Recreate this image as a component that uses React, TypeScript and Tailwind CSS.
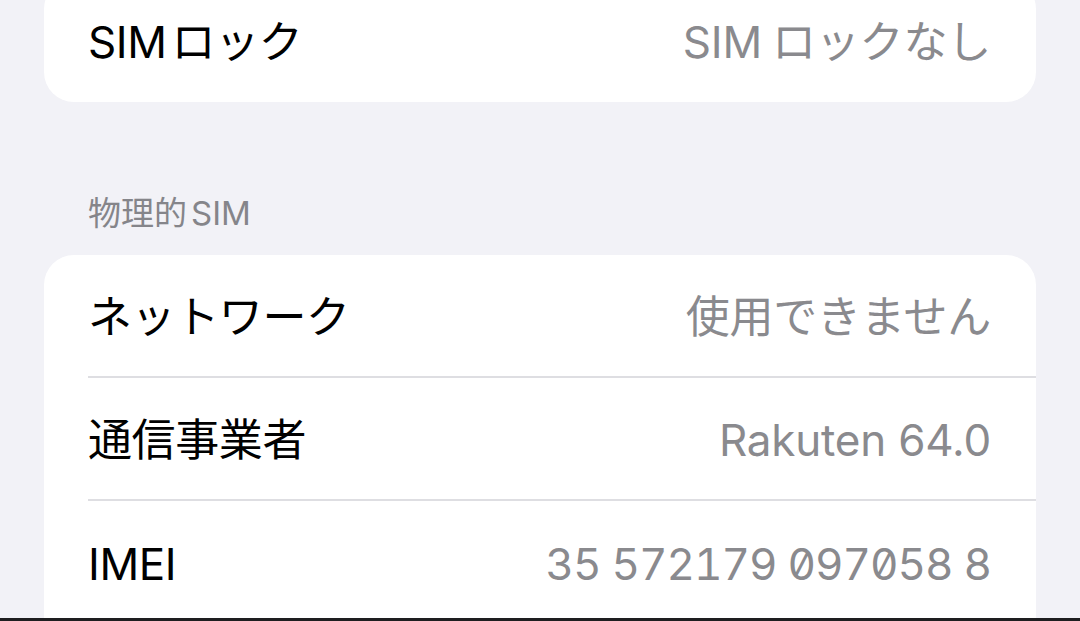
import React from 'react'

type Row = { label: React.ReactNode; value: React.ReactNode; mono?: boolean }

const font = "font-['Inter','Noto_Sans_CJK_JP',sans-serif]"

function SettingRow({ label, value, mono, last }: Row & { last?: boolean }) {
  return (
    <div className="pl-[44px]">
      <div
        className={`flex items-center justify-between h-[123px] pt-[3px] pr-[45px] ${
          last ? '' : 'border-b-[2px] border-[#dedee2]'
        }`}
      >
        <span className="text-black text-[44px] tracking-[-0.4px]">{label}</span>
        <span
          className={`text-[#8a8a8e] text-[44px] ${
            mono ? 'tabular-nums slashed-zero tracking-[-1px]' : 'tracking-[-0.2px]'
          }`}
        >
          {value}
        </span>
      </div>
    </div>
  )
}

export default function App() {
  return (
    <div className={`relative h-[621px] overflow-hidden bg-[#f2f2f7] ${font}`}>
      {/* top card, scrolled partly off screen */}
      <div className="-mt-[21px] mx-[44px] bg-white rounded-[30px]">
        <SettingRow
          label={<>SIM<span className="ml-[5px]">ロック</span></>}
          value={<>SIM<span className="ml-[10px]">ロックなし</span></>}
          last
        />
      </div>

      {/* section header */}
      <div className="pt-[90px] pb-[20px] px-[88px]">
        <span className="block text-[33px] leading-[43px] text-[#85858a]">
          物理的<span className="ml-[4px]">SIM</span>
        </span>
      </div>

      <div className="mx-[44px] pb-[60px] bg-white rounded-[30px]">
        <SettingRow label="ネットワーク" value="使用できません" />
        <SettingRow label="通信事業者" value="Rakuten 64.0" />
        <SettingRow label="IMEI" value="35 572179 097058 8" mono last />
      </div>

      {/* dark edge at the very bottom of the capture */}
      <div className="absolute left-0 right-0 bottom-0 h-[3px] bg-[#1e1e20]" />
    </div>
  )
}
